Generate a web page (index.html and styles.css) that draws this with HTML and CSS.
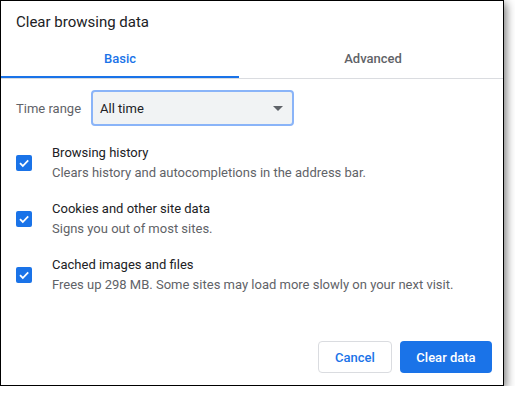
FILE: index.html
```html
<!DOCTYPE html>
<html lang="en">
<head>
  <meta charset="UTF-8" />
  <title>Clear browsing data</title>
  <link rel="stylesheet" href="styles.css">
</head>
<body>
  <div class="dialog">
    <div class="dialog-title">Clear browsing data</div>

    <div class="tabs">
      <div class="tab active">Basic</div>
      <div class="tab">Advanced</div>
    </div>

    <div class="time-range">
      <span class="time-label">Time range</span>
      <div class="select">
        <span>All time</span>
        <span class="select-arrow"></span>
      </div>
    </div>

    <div class="options">
      <div class="option">
        <span class="checkbox">
          <svg width="12" height="12" viewBox="0 0 12 12"><path d="M2 6.2 L4.8 9 L10.2 3.4" fill="none" stroke="#fff" stroke-width="1.8"/></svg>
        </span>
        <div class="option-text">
          <div class="option-title">Browsing history</div>
          <div class="option-sub">Clears history and autocompletions in the address bar.</div>
        </div>
      </div>
      <div class="option">
        <span class="checkbox">
          <svg width="12" height="12" viewBox="0 0 12 12"><path d="M2 6.2 L4.8 9 L10.2 3.4" fill="none" stroke="#fff" stroke-width="1.8"/></svg>
        </span>
        <div class="option-text">
          <div class="option-title">Cookies and other site data</div>
          <div class="option-sub">Signs you out of most sites.</div>
        </div>
      </div>
      <div class="option">
        <span class="checkbox">
          <svg width="12" height="12" viewBox="0 0 12 12"><path d="M2 6.2 L4.8 9 L10.2 3.4" fill="none" stroke="#fff" stroke-width="1.8"/></svg>
        </span>
        <div class="option-text">
          <div class="option-title">Cached images and files</div>
          <div class="option-sub">Frees up 298 MB. Some sites may load more slowly on your next visit.</div>
        </div>
      </div>
    </div>

    <div class="actions">
      <button class="btn btn-cancel">Cancel</button>
      <button class="btn btn-primary">Clear data</button>
    </div>
  </div>
</body>
</html>
```

FILE: styles.css
```css
* {
  margin: 0;
  padding: 0;
  box-sizing: border-box;
}

body {
  font-family: Roboto, 'Liberation Sans', sans-serif;
  background: #fff;
  color: #202124;
}

.dialog {
  width: 504px;
  height: 386px;
  border: 1px solid #000;
  background: #fff;
  display: flex;
  flex-direction: column;
  box-shadow: 2px 3px 9px rgba(0, 0, 0, 0.55);
}

.dialog-title {
  padding: 11px 15px 0;
  height: 39px;
  font-size: 15px;
  line-height: 20px;
}

.tabs {
  display: grid;
  grid-template-columns: 238px 1fr;
  border-bottom: 1px solid #dadce0;
}

.tab {
  height: 38px;
  line-height: 38px;
  text-align: center;
  font-size: 13px;
  font-weight: 500;
  color: #5f6368;
  border-bottom: 2px solid transparent;
}

.tab + .tab {
  padding-left: 4px;
}

.tab.active {
  color: #1a73e8;
  border-bottom-color: #1a73e8;
}

.time-range {
  display: flex;
  align-items: center;
  padding: 11px 15px 0;
}

.time-label {
  font-size: 13px;
  color: #5f6368;
  margin-right: 10px;
}

.select {
  width: 203px;
  height: 36px;
  border: 2px solid #8ab4f8;
  border-radius: 4px;
  background: #f1f3f4;
  display: flex;
  align-items: center;
  justify-content: space-between;
  padding: 0 9px 0 7px;
  font-size: 13px;
}

.select-arrow {
  width: 0;
  height: 0;
  border-left: 5px solid transparent;
  border-right: 5px solid transparent;
  border-top: 5px solid #5f6368;
}

.options {
  display: flex;
  flex-direction: column;
  gap: 16px;
  padding: 17px 15px 0;
}

.option {
  display: flex;
  align-items: center;
}

.checkbox {
  width: 16px;
  height: 16px;
  border-radius: 2px;
  background: #1a73e8;
  display: flex;
  align-items: center;
  justify-content: center;
  margin-right: 20px;
}

.option-text {
  font-size: 13px;
  line-height: 20px;
}

.option-sub {
  color: #5f6368;
}

.actions {
  margin-top: auto;
  display: flex;
  justify-content: flex-end;
  gap: 8px;
  padding: 0 11px 12px;
}

.btn {
  height: 32px;
  border-radius: 4px;
  font-family: Roboto, 'Liberation Sans', sans-serif;
  font-size: 13px;
  font-weight: 500;
  padding: 0 16px;
}

.btn-cancel {
  width: 74px;
  background: #fff;
  color: #1a73e8;
  border: 1px solid #dadce0;
}

.btn-primary {
  width: 92px;
  background: #1a73e8;
  color: #fff;
  border: none;
}
```
